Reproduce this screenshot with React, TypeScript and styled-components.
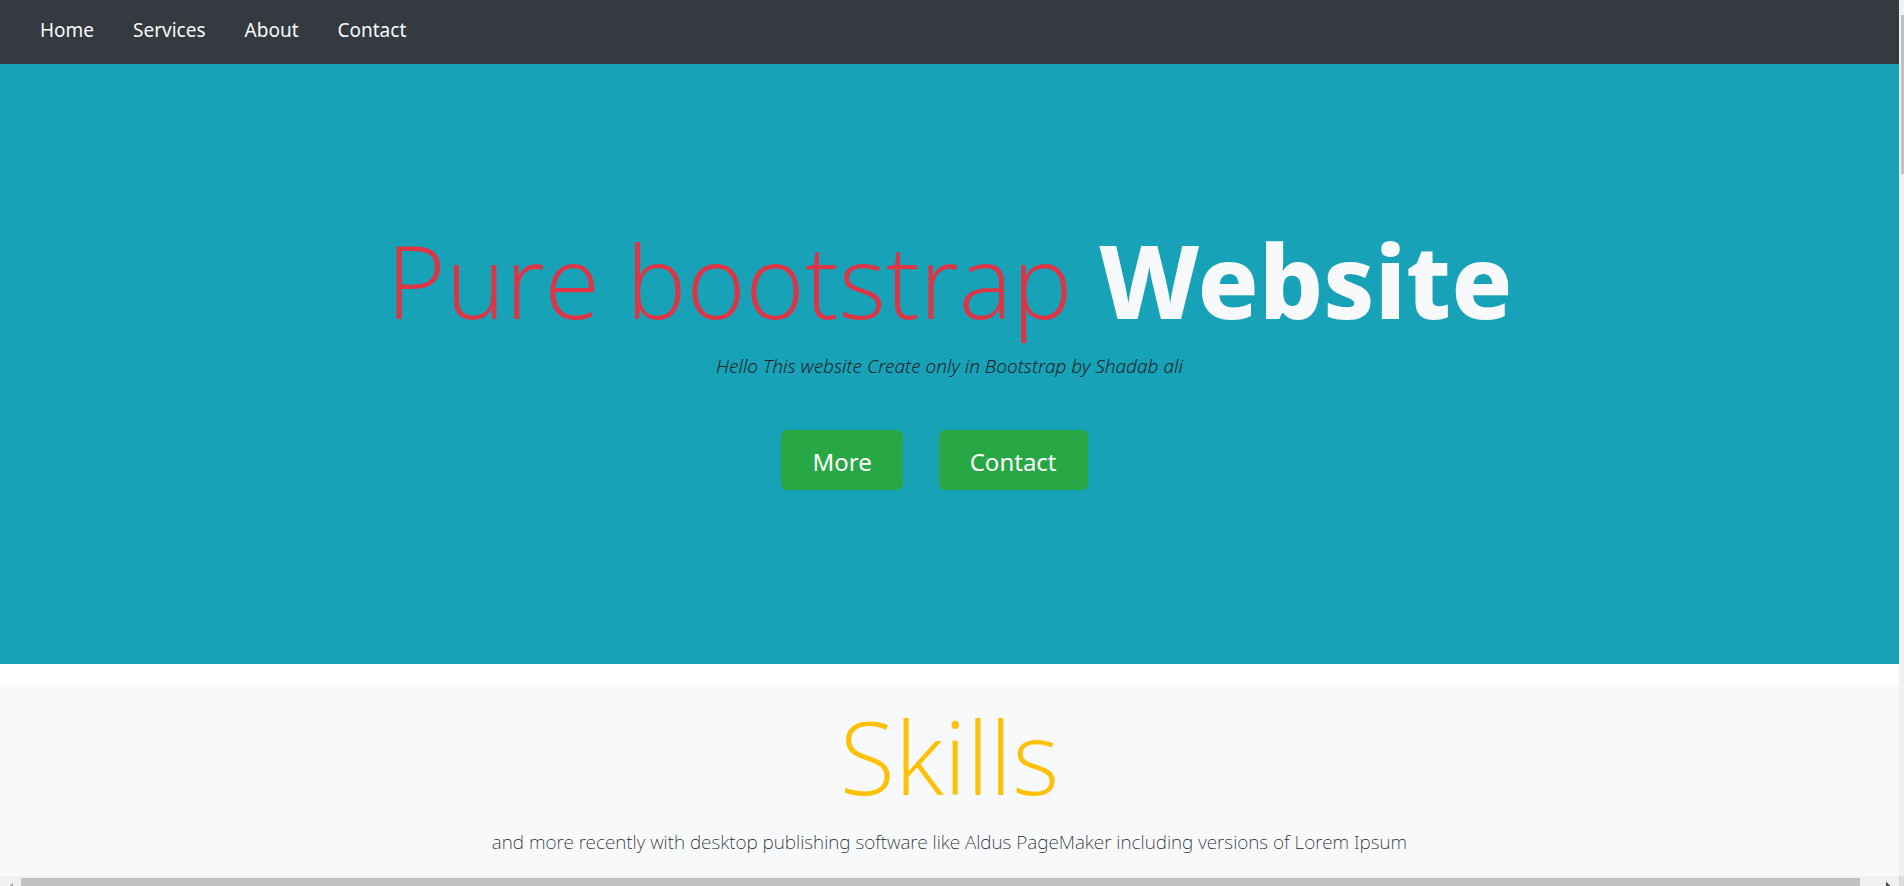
import React from 'react';
import styled, { createGlobalStyle } from 'styled-components';

const GlobalStyle = createGlobalStyle`
  *, *::before, *::after { box-sizing: border-box; }
  body {
    margin: 0;
    background: #fff;
    color: #212529;
    font-family: "Noto Sans", "Open Sans", sans-serif;
    font-size: 19px;
    line-height: 30px;
  }
`;

const Frame = styled.div`
  display: grid;
  grid-template-columns: minmax(0, 1fr) 5px;
  grid-template-rows: 1fr 10px;
  min-height: 100vh;
`;

const Page = styled.div`
  display: flex;
  flex-direction: column;
`;

const Nav = styled.nav`
  display: flex;
  gap: 39px;
  padding: 15px 40px 19px;
  background: #343a40;
`;

const NavLink = styled.a`
  color: #f8f9fa;
  text-decoration: none;
`;

const Hero = styled.header`
  display: flex;
  flex-direction: column;
  align-items: center;
  padding: 150px 20px 174px;
  background: #17a2b8;
  text-align: center;
`;

const Title = styled.h1<{ $color: string }>`
  margin: 0;
  color: ${(p) => p.$color};
  font-family: "Open Sans", "Noto Sans", sans-serif;
  font-size: 101px;
  font-weight: 300;
  line-height: 132px;
`;

const Strong = styled.strong`
  color: #f8f9fa;
  font-family: "Noto Sans", "Open Sans", sans-serif;
  font-weight: 800;
`;

const Lead = styled.p<{ $italic?: boolean }>`
  margin: 5px 0 0;
  font-weight: ${(p) => (p.$italic ? 300 : 200)};
  font-style: ${(p) => (p.$italic ? 'italic' : 'normal')};
`;

const Actions = styled.div`
  display: flex;
  gap: 36px;
  margin-top: 49px;
  padding-right: 30px;
`;

const ActionButton = styled.button`
  height: 60px;
  padding: 4px 31px 0;
  border: 0;
  border-radius: 6px;
  background: #28a745;
  color: #fff;
  font-family: inherit;
  font-size: 24px;
  line-height: 36px;
`;

const Skills = styled.section`
  flex: 1;
  margin-top: 20px;
  padding: 6px 20px 12px;
  background: #f8f9fa;
  text-align: center;
`;

const VerticalTrack = styled.div`
  padding: 15px 0 0 2px;
  background: #f1f1f1;
`;

const VerticalThumb = styled.div`
  height: 159px;
  background: #c1c1c1;
`;

const HorizontalTrack = styled.div`
  display: grid;
  grid-template-columns: 21px 1fr 39px;
  background: #f1f1f1;
`;

const HorizontalThumb = styled.div`
  margin-top: 2px;
  background: #c1c1c1;
`;

const Arrow = styled.svg`
  display: block;
  width: 100%;
  height: 10px;
`;

const Corner = styled.div`
  background: #dcdcdc;
`;

const links = ['Home', 'Services', 'About', 'Contact'];

export default function App() {
  return (
    <>
      <GlobalStyle />
      <Frame>
        <Page>
          <Nav>
            {links.map((name) => (
              <NavLink key={name} href={`#${name.toLowerCase()}`}>{name}</NavLink>
            ))}
          </Nav>
          <Hero>
            <Title $color="#dc3545">
              Pure bootstrap <Strong>Website</Strong>
            </Title>
            <Lead $italic>Hello This website Create only in Bootstrap by Shadab ali</Lead>
            <Actions>
              <ActionButton type="button">More</ActionButton>
              <ActionButton type="button">Contact</ActionButton>
            </Actions>
          </Hero>
          <Skills>
            <Title as="h2" $color="#ffc107">Skills</Title>
            <Lead>
              and more recently with desktop publishing software like Aldus PageMaker including
              versions of Lorem Ipsum
            </Lead>
          </Skills>
        </Page>
        <VerticalTrack aria-hidden="true">
          <VerticalThumb />
        </VerticalTrack>
        <HorizontalTrack aria-hidden="true">
          <Arrow viewBox="0 0 21 10" shapeRendering="crispEdges">
            <path d="M13 6v4H9z" fill="#a3a3a3" />
          </Arrow>
          <HorizontalThumb />
          <Arrow viewBox="0 0 39 10" shapeRendering="crispEdges">
            <path d="M26 6v4h4z" fill="#505050" />
          </Arrow>
        </HorizontalTrack>
        <Corner aria-hidden="true" />
      </Frame>
    </>
  );
}
